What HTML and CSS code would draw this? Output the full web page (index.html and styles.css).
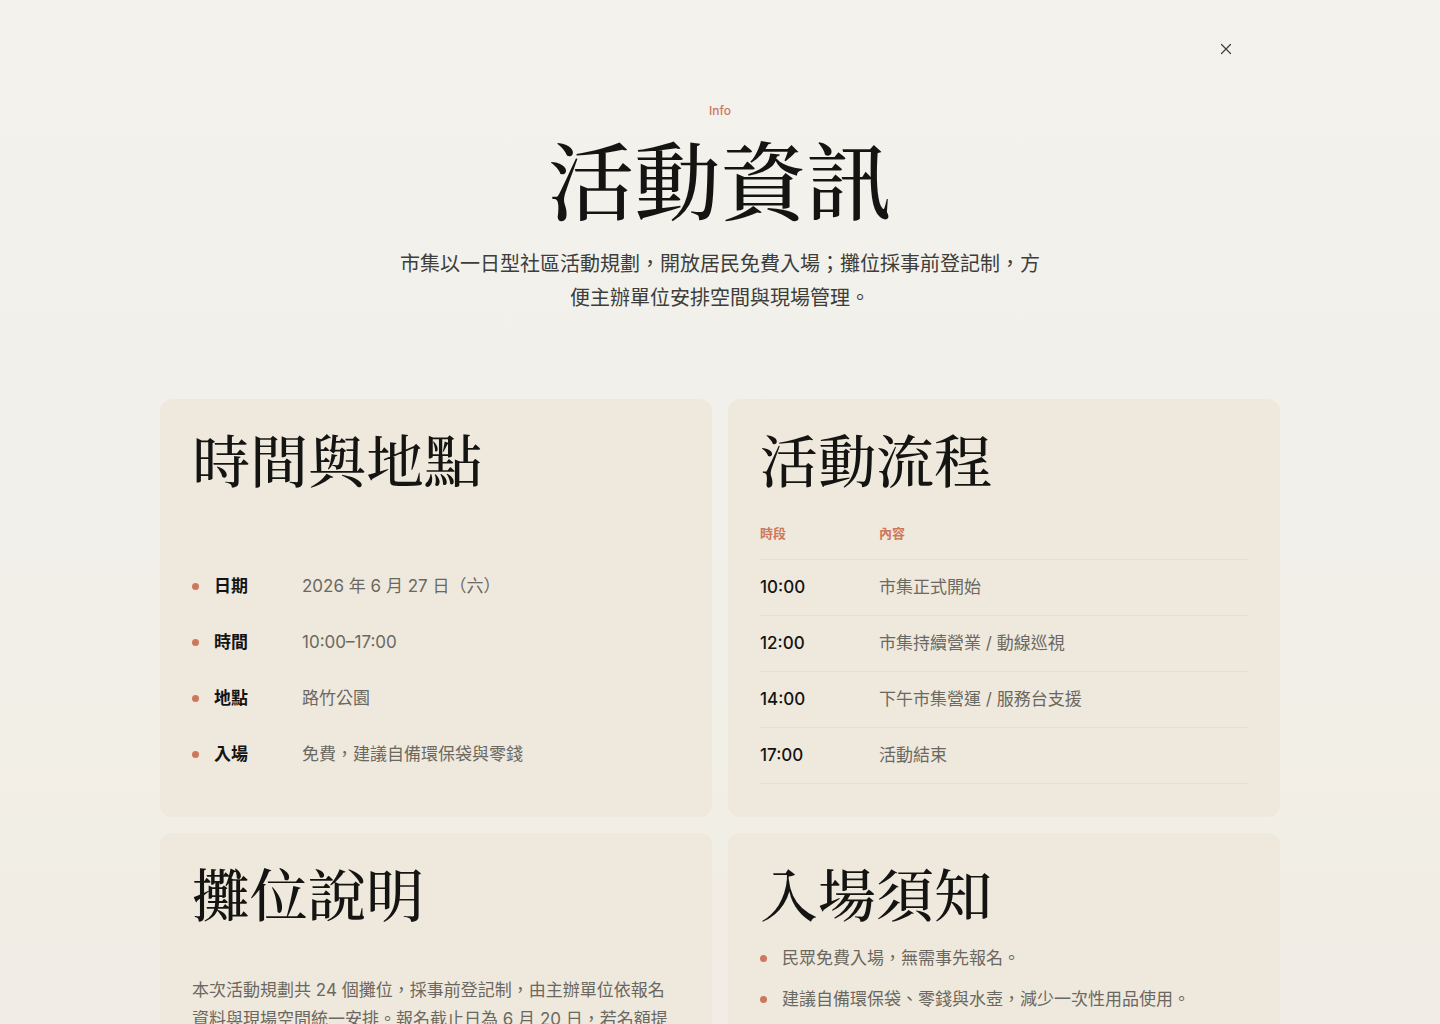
FILE: index.html
```html
<!DOCTYPE html>
<html lang="zh-Hant">
<head>
    <meta charset="UTF-8">
    <meta name="viewport" content="width=device-width, initial-scale=1.0">
    <title>活動資訊</title>
    <link rel="stylesheet" href="styles.css">
</head>
<body>
    <div class="overlay" role="dialog" aria-labelledby="info-title">
        <div class="container">
            <div class="toolbar">
                <button class="close-btn" type="button" aria-label="關閉">
                    <svg width="12" height="12" viewBox="0 0 12 12" fill="none" stroke="currentColor" stroke-width="1.2" stroke-linecap="round">
                        <path d="M1.5 1.5l9 9M10.5 1.5l-9 9"/>
                    </svg>
                </button>
            </div>

            <header class="header">
                <p class="eyebrow">Info</p>
                <h1 id="info-title">活動資訊</h1>
                <p class="lead">市集以一日型社區活動規劃，開放居民免費入場；攤位採事前登記制，方便主辦單位安排空間與現場管理。</p>
            </header>

            <main class="cards">
                <section class="card card-between">
                    <h2>時間與地點</h2>
                    <dl class="facts">
                        <div class="fact">
                            <dt>日期</dt>
                            <dd>2026 年 6 月 27 日（六）</dd>
                        </div>
                        <div class="fact">
                            <dt>時間</dt>
                            <dd>10:00–17:00</dd>
                        </div>
                        <div class="fact">
                            <dt>地點</dt>
                            <dd>路竹公園</dd>
                        </div>
                        <div class="fact">
                            <dt>入場</dt>
                            <dd>免費，建議自備環保袋與零錢</dd>
                        </div>
                    </dl>
                </section>

                <section class="card">
                    <h2>活動流程</h2>
                    <table class="schedule">
                        <thead>
                            <tr><th scope="col">時段</th><th scope="col">內容</th></tr>
                        </thead>
                        <tbody>
                            <tr><th scope="row">10:00</th><td>市集正式開始</td></tr>
                            <tr><th scope="row">12:00</th><td>市集持續營業 / 動線巡視</td></tr>
                            <tr><th scope="row">14:00</th><td>下午市集營運 / 服務台支援</td></tr>
                            <tr><th scope="row">17:00</th><td>活動結束</td></tr>
                        </tbody>
                    </table>
                </section>

                <section class="card">
                    <h2>攤位說明</h2>
                    <p class="card-text">本次活動規劃共 24 個攤位，採事前登記制，由主辦單位依報名資料與現場空間統一安排。報名截止日為 6 月 20 日，若名額提</p>
                </section>

                <section class="card">
                    <h2>入場須知</h2>
                    <ul class="notes">
                        <li>民眾免費入場，無需事先報名。</li>
                        <li>建議自備環保袋、零錢與水壺，減少一次性用品使用。</li>
                    </ul>
                </section>
            </main>
        </div>
    </div>
</body>
</html>
```
FILE: styles.css
```css
* {
    margin: 0;
    padding: 0;
    box-sizing: border-box;
}

:root {
    --ink: #141413;
    --text: #3d3d3a;
    --muted: #6a6861;
    --accent: #cc785c;
    --card: #efe9dd;
    --line: #e4dfd3;
    --serif: "Noto Serif TC", "Noto Serif CJK TC", "Noto Sans CJK TC", serif;
}

body {
    background: #f2f0ea;
    color: var(--ink);
    font-family: Inter, "Noto Sans CJK TC", sans-serif;
    font-size: 17px;
    line-height: 29px;
}

.overlay {
    position: fixed;
    inset: 0;
    overflow-y: auto;
    scrollbar-width: none;
    background: linear-gradient(#f3f2ed, #f1f0eb 40%, #f2efe6 75%, #f1ece5);
}

.container {
    max-width: 1184px;
    margin: 0 auto;
    padding: 27px 32px 64px;
}

.toolbar {
    display: flex;
    justify-content: flex-end;
    padding-right: 32px;
}

.close-btn {
    display: flex;
    align-items: center;
    justify-content: center;
    width: 44px;
    height: 44px;
    border: none;
    border-radius: 50%;
    background: transparent;
    color: var(--text);
    cursor: pointer;
}

/* Header */
.header {
    display: flex;
    flex-direction: column;
    align-items: center;
    padding: 31px 0 84px;
    text-align: center;
}

.eyebrow {
    color: var(--accent);
    font-size: 12px;
    font-weight: 500;
    line-height: 18px;
}

h1, h2 {
    font-family: var(--serif);
    font-weight: 500;
}

h1 {
    margin: 14px 0 26px;
    font-size: 86px;
    line-height: 87px;
}

.lead {
    max-width: 640px;
    color: var(--text);
    font-size: 20px;
    line-height: 34px;
}

/* Cards */
.cards {
    display: grid;
    grid-template-columns: repeat(2, 1fr);
    gap: 16px;
}

.card {
    display: flex;
    flex-direction: column;
    padding: 30px 32px 33px;
    border-radius: 12px;
    background: var(--card);
}

.card-between {
    justify-content: space-between;
}

h2 {
    font-size: 58px;
    line-height: 58px;
}

.fact {
    display: grid;
    grid-template-columns: 7px 73px 1fr;
    column-gap: 15px;
    align-items: center;
    min-height: 56px;
}

.facts {
    padding-bottom: 1px;
}

.fact::before,
.notes li::before {
    content: "";
    width: 7px;
    height: 7px;
    border-radius: 50%;
    background: var(--accent);
}

.fact dt {
    font-weight: 600;
}

.fact dd {
    color: var(--muted);
}

.schedule {
    width: 100%;
    margin-top: 22px;
    border-collapse: collapse;
    text-align: left;
}

.schedule th,
.schedule td {
    height: 56px;
    border-bottom: 1px solid var(--line);
}

.schedule th {
    width: 119px;
    font-weight: 500;
}

.schedule td {
    color: var(--muted);
}

.schedule thead th {
    height: 50px;
    color: var(--accent);
    font-size: 13px;
    font-weight: 600;
}

.schedule thead th:last-child {
    width: auto;
}

.card-text {
    margin-top: 55px;
    color: var(--muted);
}

.notes {
    display: flex;
    flex-direction: column;
    gap: 12px;
    margin-top: 23px;
    list-style: none;
    color: var(--muted);
}

.notes li {
    display: flex;
    align-items: center;
    gap: 15px;
}

@media (max-width: 900px) {
    .cards {
        grid-template-columns: 1fr;
    }
}
```
